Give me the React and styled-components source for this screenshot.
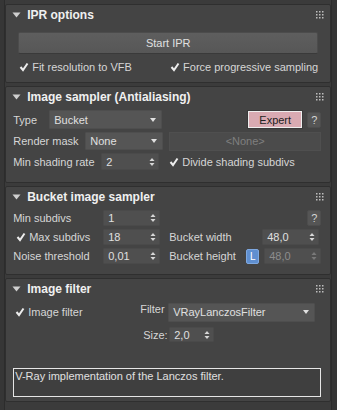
import React from "react";
import styled, { createGlobalStyle } from "styled-components";

const GlobalStyle = createGlobalStyle`
  html, body {
    margin: 0;
    padding: 0;
    background: #3b3b3b;
  }
  body {
    font-family: "Liberation Sans", Arial, sans-serif;
    font-size: 11px;
    color: #d6d6d6;
  }
`;

const Screen = styled.div`
  width: 337px;
  height: 410px;
  display: flex;
  overflow: hidden;
  background: #3b3b3b;
`;

const LeftStrip = styled.div`
  width: 7px;
  background: #363636;
  border-right: 1px solid #2c2c2c;
`;

const Column = styled.div`
  flex: 1;
  display: flex;
  flex-direction: column;
  gap: 3px;
  padding-top: 4px;
`;

const ScrollStrip = styled.div`
  width: 8px;
  background: #353535;
  border-left: 1px solid #2c2c2c;
`;

const Rollout = styled.div`
  background: #444444;
  border: 1px solid #2f2f2f;
  border-radius: 2px;
  height: ${(p) => p.h}px;
  box-sizing: border-box;
  display: flex;
  flex-direction: column;
`;

const Header = styled.div`
  height: 20px;
  display: flex;
  align-items: center;
  padding: 0 6px 0 6px;
  gap: 6px;
`;

const Title = styled.div`
  flex: 1;
  font-weight: bold;
  font-size: 12px;
  color: #f0f0f0;
`;

const Body = styled.div`
  display: flex;
  flex-direction: column;
  padding: ${(p) => p.pad || "2px 8px 0 7px"};
  gap: ${(p) => p.gap || 3}px;
`;

const Row = styled.div`
  display: flex;
  align-items: center;
  height: ${(p) => p.h || 17}px;
  gap: ${(p) => p.gap || 0}px;
  justify-content: ${(p) => p.justify || "flex-start"};
`;

const Label = styled.span`
  width: ${(p) => (p.w ? `${p.w}px` : "auto")};
  flex-shrink: 0;
  color: ${(p) => (p.dim ? "#8a8a8a" : "#d6d6d6")};
  white-space: nowrap;
  font-size: 11px;
`;

const BigButton = styled.div`
  height: 20px;
  margin: 0 4px 0 5px;
  background: linear-gradient(#5e5e5e, #575757);
  border: 1px solid #4c4c4c;
  border-bottom-color: #3a3a3a;
  border-radius: 2px;
  display: flex;
  align-items: center;
  justify-content: center;
  color: #e0e0e0;
  font-size: 11px;
`;

const Combo = styled.div`
  width: ${(p) => p.w}px;
  height: ${(p) => p.hgt || 17}px;
  flex-shrink: 0;
  box-sizing: border-box;
  background: #555555;
  border: 1px solid #4e4e4e;
  border-radius: 1px;
  display: flex;
  align-items: center;
  justify-content: space-between;
  padding: 0 4px 0 4px;
  color: ${(p) => (p.dim ? "#8d8d8d" : "#e0e0e0")};
`;

const Spin = styled(Combo)`
  padding-right: 3px;
  background: #4f4f4f;
  border-color: #4a4a4a;
`;

const Disabled = styled.div`
  flex: 1;
  height: 17px;
  background: #4b4b4b;
  border: 1px solid #4f4f4f;
  display: flex;
  align-items: center;
  justify-content: center;
  color: #7f7f7f;
`;

const CheckWrap = styled.div`
  display: flex;
  align-items: center;
  gap: 3px;
  color: #d6d6d6;
  white-space: nowrap;
`;

const ExpertButton = styled.div`
  width: 52px;
  height: 15px;
  background: #d9aab2;
  border: 1px solid #eee;
  outline: 1px solid #3a3a3a;
  color: #222;
  display: flex;
  align-items: center;
  justify-content: center;
  font-size: 11px;
`;

const Help = styled.div`
  width: 12px;
  height: 14px;
  background: #555;
  border: 1px solid #4d4d4d;
  border-radius: 2px;
  display: flex;
  align-items: center;
  justify-content: center;
  color: #d4d4d4;
  font-size: 11px;
`;

const LockBadge = styled.div`
  width: 11px;
  height: 13px;
  border-radius: 2px;
  background: #5f8fd0;
  border: 1px solid #7ea8e0;
  color: #fff;
  font-size: 10px;
  display: flex;
  align-items: center;
  justify-content: center;
  margin-right: 5px;
`;

const Spacer = styled.div`
  flex: 1;
`;

const Gap = styled.span`
  width: ${(p) => p.w}px;
  flex-shrink: 0;
  display: flex;
  padding-left: ${(p) => p.pl || 0}px;
  box-sizing: border-box;
`;

const DescBox = styled.div`
  margin: ${(p) => p.m};
  height: 29px;
  border: 1px solid #e6e6e6;
  background: #3f3f3f;
  padding: 1px 1px;
  color: #e0e0e0;
  font-size: 11px;
  box-sizing: border-box;
`;

function Arrow() {
  return (
    <svg width="8" height="6" viewBox="0 0 8 6">
      <path d="M1 1 L7 1 L4 5 Z" fill="#e0e0e0" />
    </svg>
  );
}

function Triangle() {
  return (
    <svg width="9" height="6" viewBox="0 0 9 6">
      <path d="M0.5 0.5 L8.5 0.5 L4.5 5.5 Z" fill="#cfcfcf" />
    </svg>
  );
}

function Grip() {
  const dots = [];
  for (let r = 0; r < 3; r++)
    for (let c = 0; c < 3; c++)
      dots.push(<rect key={`${r}${c}`} x={c * 3} y={r * 3} width="1.5" height="1.5" fill="#bdbdbd" />);
  return (
    <svg width="8" height="8" viewBox="0 0 8 8">
      {dots}
    </svg>
  );
}

function Spinner({ dim }) {
  const c = dim ? "#7a7a7a" : "#d8d8d8";
  return (
    <svg width="6" height="10" viewBox="0 0 6 10">
      <path d="M0.5 4 L3 1 L5.5 4 Z" fill={c} />
      <path d="M0.5 6 L3 9 L5.5 6 Z" fill={c} />
    </svg>
  );
}

function Check({ children }) {
  return (
    <CheckWrap>
      <svg width="10" height="10" viewBox="0 0 10 10">
        <path d="M1.5 5 L4 8 L8.5 1.5" stroke="#ececec" strokeWidth="2" fill="none" />
      </svg>
      {children}
    </CheckWrap>
  );
}

function Panel({ title, h, children }) {
  return (
    <Rollout h={h}>
      <Header>
        <Triangle />
        <Title>{title}</Title>
        <Grip />
      </Header>
      {children}
    </Rollout>
  );
}

export default function App() {
  return (
    <Screen>
      <GlobalStyle />
      <LeftStrip />
      <Column>
        <Panel title="IPR options" h={79}>
          <Body pad="7px 8px 0 7px" gap={4}>
            <BigButton>Start IPR</BigButton>
            <Row h={17} justify="space-between" style={{ padding: "0 4px 0 6px" }}>
              <Check>Fit resolution to VFB</Check>
              <Check>Force progressive sampling</Check>
            </Row>
          </Body>
        </Panel>

        <Panel title="Image sampler (Antialiasing)" h={97}>
          <Body pad="3px 9px 0 7px" gap={3}>
            <Row h={19}>
              <Label w={36}>Type</Label>
              <Combo w={113} hgt={19}>
                Bucket <Arrow />
              </Combo>
              <Spacer />
              <ExpertButton>Expert</ExpertButton>
              <Help style={{ marginLeft: 5 }}>?</Help>
            </Row>
            <Row h={18} gap={6}>
              <Label w={66}>Render mask</Label>
              <Combo w={78} hgt={18}>
                None <Arrow />
              </Combo>
              <Disabled>&lt;None&gt;</Disabled>
            </Row>
            <Row h={17}>
              <Label w={88}>Min shading rate</Label>
              <Spin w={58}>
                2 <Spinner />
              </Spin>
              <Gap w={10} />
              <Check>Divide shading subdivs</Check>
            </Row>
          </Body>
        </Panel>

        <Panel title="Bucket image sampler" h={89}>
          <Body pad="3px 9px 0 7px" gap={3}>
            <Row h={16}>
              <Label w={90}>Min subdivs</Label>
              <Spin w={57} hgt={16}>
                1 <Spinner />
              </Spin>
              <Spacer />
              <Help>?</Help>
            </Row>
            <Row h={16}>
              <Gap w={90} pl={3}>
                <Check>Max subdivs</Check>
              </Gap>
              <Spin w={57} hgt={16}>
                18 <Spinner />
              </Spin>
              <Gap w={9} />
              <Label w={93}>Bucket width</Label>
              <Spin w={57} hgt={16}>
                48,0 <Spinner />
              </Spin>
            </Row>
            <Row h={16}>
              <Label w={90}>Noise threshold</Label>
              <Spin w={57} hgt={16}>
                0,01 <Spinner />
              </Spin>
              <Gap w={9} />
              <Label w={77}>Bucket height</Label>
              <LockBadge>L</LockBadge>
              <Spin w={57} hgt={16} dim>
                48,0 <Spinner dim />
              </Spin>
            </Row>
          </Body>
        </Panel>

        <Panel title="Image filter" h={124}>
          <Body pad="4px 9px 0 9px" gap={6}>
            <Row h={18}>
              <Gap w={125}>
                <Check>Image filter</Check>
              </Gap>
              <Label w={28} style={{ alignSelf: "flex-start" }}>Filter</Label>
              <Combo w={147} hgt={19}>
                VRayLanczosFilter <Arrow />
              </Combo>
            </Row>
            <Row h={15}>
              <Gap w={128} />
              <Label w={26}>Size:</Label>
              <Spin w={45} hgt={15}>
                2,0 <Spinner />
              </Spin>
            </Row>
          </Body>
          <DescBox m="26px 9px 0 7px">V-Ray implementation of the Lanczos filter.</DescBox>
        </Panel>
      </Column>
      <ScrollStrip />
    </Screen>
  );
}
